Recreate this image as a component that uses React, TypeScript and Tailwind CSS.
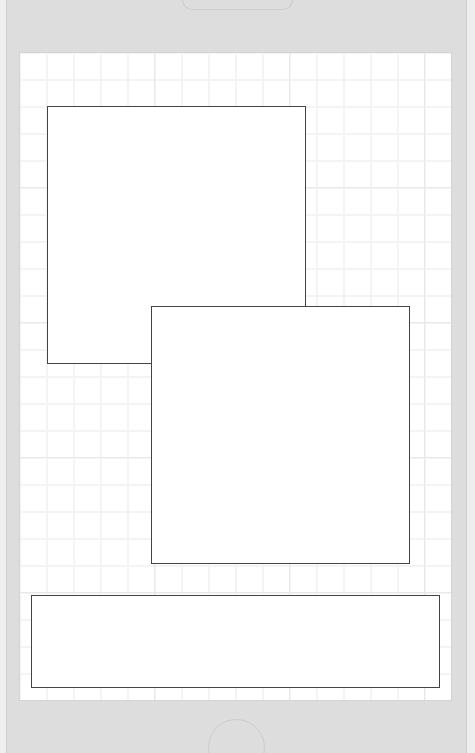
import React from 'react';

interface Block {
  id: string;
  className: string;
}

// wireframe blocks sitting on the grid canvas
const blocks: Block[] = [
  { id: 'a', className: 'left-[27px] top-[53px] w-[259px] h-[258px]' },
  { id: 'b', className: 'left-[131px] top-[253px] w-[259px] h-[258px]' },
  { id: 'c', className: 'left-[11px] top-[542px] w-[409px] h-[93px]' },
];

const App: React.FC = () => {
  return (
    <div className="h-[753px] w-[475px] overflow-hidden bg-[#eeeeee] pl-[6px]">
      <div className="flex h-full w-[461px] flex-col border-x border-[#cccccc] bg-[#dddddd]">
        {/* speaker */}
        <div className="ml-[175px] h-[10px] w-[111px] shrink-0 rounded-b-[10px] border border-t-0 border-[#cccccc]"></div>

        {/* screen */}
        <div className="relative ml-[12px] mt-[42px] h-[649px] w-[433px] shrink-0 border border-[#d4d4d4] bg-white bg-[linear-gradient(to_right,#e8e8e8_1px,transparent_1px),linear-gradient(to_bottom,#e8e8e8_1px,transparent_1px),linear-gradient(to_right,#f4f4f4_2px,transparent_2px),linear-gradient(to_bottom,#f4f4f4_2px,transparent_2px)] bg-[size:135px_135px,135px_135px,27px_27px,27px_27px] bg-[position:-1px_-1px,-1px_-1px,-1px_-1px,-1px_-1px]">
          {blocks.map((b) => (
            <div key={b.id} className={`absolute border border-[#444444] bg-white ${b.className}`}></div>
          ))}
        </div>

        {/* home button */}
        <div className="ml-[201px] mt-[18px] h-[57px] w-[57px] shrink-0 rounded-full border border-[#cccccc]"></div>
      </div>
    </div>
  );
};

export default App;
